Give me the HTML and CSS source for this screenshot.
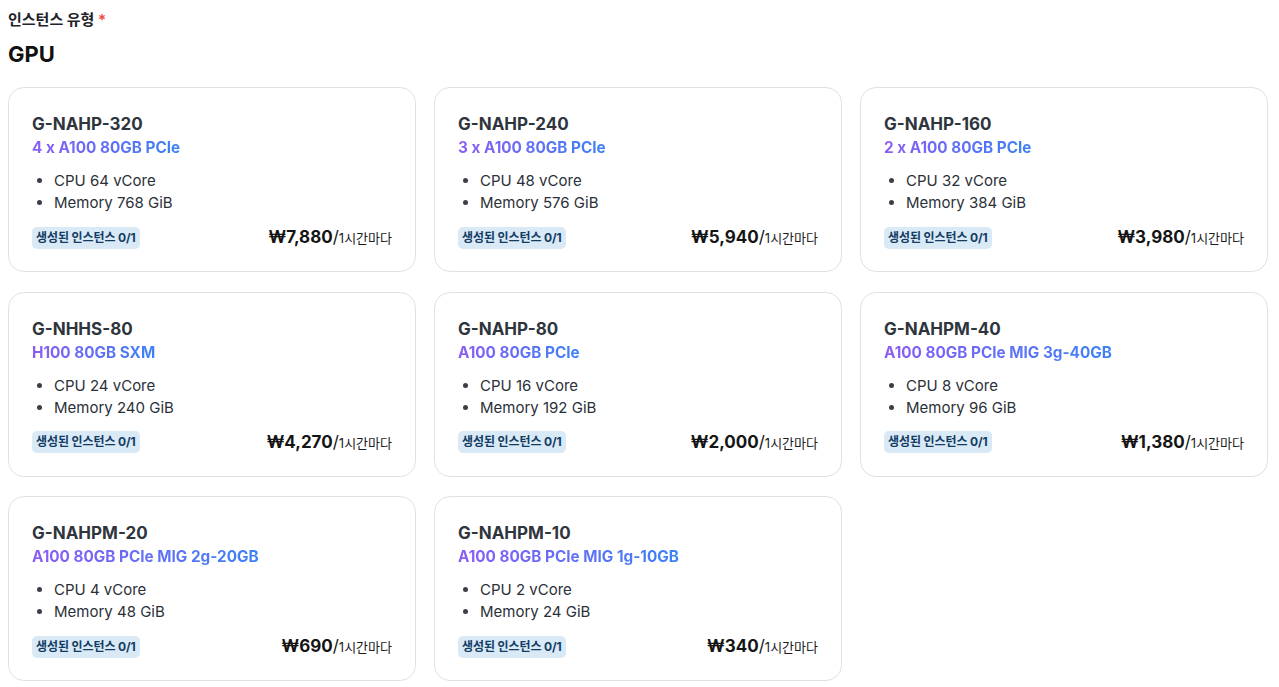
FILE: index.html
```html
<!DOCTYPE html>
<html lang="ko">
<head>
<meta charset="utf-8">
<title>인스턴스 유형</title>
<link rel="stylesheet" href="styles.css">
</head>
<body>
<div class="page">
  <div class="field-label">인스턴스 유형 <span class="req">*</span></div>
  <h2 class="group-title">GPU</h2>
  <div class="grid">
    <div class="card">
      <div class="name">G-NAHP-320</div>
      <div class="spec"><span class="grad">4 x A100 80GB PCIe</span></div>
      <ul class="res"><li>CPU 64 vCore</li><li>Memory 768 GiB</li></ul>
      <div class="foot"><span class="badge">생성된 인스턴스 0/1</span><span class="price"><b>₩7,880</b>/<small>1시간마다</small></span></div>
    </div>
    <div class="card">
      <div class="name">G-NAHP-240</div>
      <div class="spec"><span class="grad">3 x A100 80GB PCIe</span></div>
      <ul class="res"><li>CPU 48 vCore</li><li>Memory 576 GiB</li></ul>
      <div class="foot"><span class="badge">생성된 인스턴스 0/1</span><span class="price"><b>₩5,940</b>/<small>1시간마다</small></span></div>
    </div>
    <div class="card">
      <div class="name">G-NAHP-160</div>
      <div class="spec"><span class="grad">2 x A100 80GB PCIe</span></div>
      <ul class="res"><li>CPU 32 vCore</li><li>Memory 384 GiB</li></ul>
      <div class="foot"><span class="badge">생성된 인스턴스 0/1</span><span class="price"><b>₩3,980</b>/<small>1시간마다</small></span></div>
    </div>
    <div class="card">
      <div class="name">G-NHHS-80</div>
      <div class="spec"><span class="grad">H100 80GB SXM</span></div>
      <ul class="res"><li>CPU 24 vCore</li><li>Memory 240 GiB</li></ul>
      <div class="foot"><span class="badge">생성된 인스턴스 0/1</span><span class="price"><b>₩4,270</b>/<small>1시간마다</small></span></div>
    </div>
    <div class="card">
      <div class="name">G-NAHP-80</div>
      <div class="spec"><span class="grad">A100 80GB PCIe</span></div>
      <ul class="res"><li>CPU 16 vCore</li><li>Memory 192 GiB</li></ul>
      <div class="foot"><span class="badge">생성된 인스턴스 0/1</span><span class="price"><b>₩2,000</b>/<small>1시간마다</small></span></div>
    </div>
    <div class="card">
      <div class="name">G-NAHPM-40</div>
      <div class="spec"><span class="grad">A100 80GB PCIe MIG 3g-40GB</span></div>
      <ul class="res"><li>CPU 8 vCore</li><li>Memory 96 GiB</li></ul>
      <div class="foot"><span class="badge">생성된 인스턴스 0/1</span><span class="price"><b>₩1,380</b>/<small>1시간마다</small></span></div>
    </div>
    <div class="card">
      <div class="name">G-NAHPM-20</div>
      <div class="spec"><span class="grad">A100 80GB PCIe MIG 2g-20GB</span></div>
      <ul class="res"><li>CPU 4 vCore</li><li>Memory 48 GiB</li></ul>
      <div class="foot"><span class="badge">생성된 인스턴스 0/1</span><span class="price"><b>₩690</b>/<small>1시간마다</small></span></div>
    </div>
    <div class="card">
      <div class="name">G-NAHPM-10</div>
      <div class="spec"><span class="grad">A100 80GB PCIe MIG 1g-10GB</span></div>
      <ul class="res"><li>CPU 2 vCore</li><li>Memory 24 GiB</li></ul>
      <div class="foot"><span class="badge">생성된 인스턴스 0/1</span><span class="price"><b>₩340</b>/<small>1시간마다</small></span></div>
    </div>
  </div>
</div>
</body>
</html>
```

FILE: styles.css
```css
* { box-sizing: border-box; }
html, body { background: #ffffff; }
body {
  margin: 8px;
  font-family: Inter, "Noto Sans CJK KR", sans-serif;
  color: #222222;
}
.page { width: 1260px; }
.field-label {
  margin-top: 2px;
  font-size: 15px;
  line-height: 20px;
  font-weight: 700;
  color: #1f2329;
}
.req { color: #ef4444; font-weight: 600; }
.group-title {
  margin: 0;
  margin-top: 10px;
  font-size: 22px;
  line-height: 28px;
  font-weight: 700;
  color: #111111;
}
.grid {
  margin-top: 19px;
  display: grid;
  grid-template-columns: repeat(3, 408px);
  grid-auto-rows: 185px;
  column-gap: 18px;
  row-gap: 19.5px;
}
.card {
  border: 1px solid #dfe1e6;
  border-radius: 16px;
  padding: 24px 23px 0 23px;
  display: flex;
  flex-direction: column;
}
.name {
  font-size: 17px;
  line-height: 24px;
  font-weight: 700;
  color: #2f353d;
}
.spec {
  font-size: 15.3px;
  line-height: 24px;
  font-weight: 700;
}
.grad {
  background: linear-gradient(90deg, #8b5cf6 0%, #3b82f6 100%);
  -webkit-background-clip: text;
  background-clip: text;
  color: transparent;
}
.res {
  margin: 10px 0 0 0;
  padding-left: 22px;
  font-size: 15px;
  line-height: 22px;
  color: #2b3038;
}
.res li::marker { color: #3a3f47; }
.foot {
  margin-top: 12px;
  display: flex;
  justify-content: space-between;
  align-items: center;
}
.badge {
  display: inline-block;
  height: 22px;
  line-height: 22px;
  padding: 0 4px;
  border-radius: 5px;
  background: #d9e9f6;
  color: #123c63;
  font-size: 12px;
  font-weight: 700;
  letter-spacing: -0.1px;
}
.price {
  font-size: 17px;
  line-height: 22px;
  color: #151515;
}
.price b { font-weight: 700; }
.price small { font-size: 13px; font-weight: 400; color: #1c1c1c; }
```
